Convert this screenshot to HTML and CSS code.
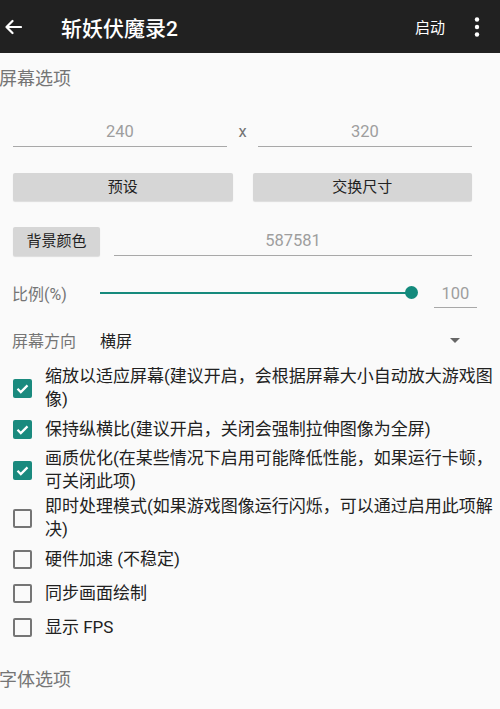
FILE: index.html
```html
<!DOCTYPE html>
<html lang="zh-CN">
<head>
    <meta charset="UTF-8">
    <meta name="viewport" content="width=device-width, initial-scale=1.0">
    <title>斩妖伏魔录2</title>
    <link rel="stylesheet" href="styles.css">
</head>
<body>
<div class="toolbar">
    <svg class="back" width="18" height="16" viewBox="0 0 18 16">
        <path d="M17 8H2.5M8.5 2L2.5 8l6 6" fill="none" stroke="#fff" stroke-width="2.2" stroke-linecap="round" stroke-linejoin="round"/>
    </svg>
    <div class="title">斩妖伏魔录2</div>
    <div class="action">启动</div>
    <svg class="more" width="6" height="20" viewBox="0 0 6 20">
        <circle cx="3" cy="2.5" r="2.2" fill="#fff"/>
        <circle cx="3" cy="10" r="2.2" fill="#fff"/>
        <circle cx="3" cy="17.5" r="2.2" fill="#fff"/>
    </svg>
</div>

<div class="section-title">屏幕选项</div>

<div class="group">
    <div class="size-row">
        <div class="field">240</div>
        <div class="times">x</div>
        <div class="field">320</div>
    </div>

    <div class="button-row">
        <div class="btn">预设</div>
        <div class="btn">交换尺寸</div>
    </div>

    <div class="color-row">
        <div class="btn btn-small">背景颜色</div>
        <div class="field">587581</div>
    </div>

    <div class="scale-row">
        <div class="label">比例(%)</div>
        <div class="slider">
            <div class="thumb"></div>
        </div>
        <div class="field field-small">100</div>
    </div>

    <div class="orient-row">
        <div class="label">屏幕方向</div>
        <div class="value">横屏</div>
        <div class="caret"></div>
    </div>
</div>

<div class="checks">
    <div class="check-row">
        <span class="box checked"><svg width="19" height="19" viewBox="0 0 19 19"><path d="M4.5 9.8l3.3 3.3 6.7-6.7" fill="none" stroke="#fff" stroke-width="2.2"/></svg></span>
        <span class="check-text">缩放以适应屏幕(建议开启，会根据屏幕大小自动放大游戏图<br>像)</span>
    </div>
    <div class="check-row">
        <span class="box checked"><svg width="19" height="19" viewBox="0 0 19 19"><path d="M4.5 9.8l3.3 3.3 6.7-6.7" fill="none" stroke="#fff" stroke-width="2.2"/></svg></span>
        <span class="check-text">保持纵横比(建议开启，关闭会强制拉伸图像为全屏)</span>
    </div>
    <div class="check-row">
        <span class="box checked"><svg width="19" height="19" viewBox="0 0 19 19"><path d="M4.5 9.8l3.3 3.3 6.7-6.7" fill="none" stroke="#fff" stroke-width="2.2"/></svg></span>
        <span class="check-text">画质优化(在某些情况下启用可能降低性能，如果运行卡顿，<br>可关闭此项)</span>
    </div>
    <div class="check-row">
        <span class="box"></span>
        <span class="check-text">即时处理模式(如果游戏图像运行闪烁，可以通过启用此项解<br>决)</span>
    </div>
    <div class="check-row">
        <span class="box"></span>
        <span class="check-text">硬件加速 (不稳定)</span>
    </div>
    <div class="check-row">
        <span class="box"></span>
        <span class="check-text">同步画面绘制</span>
    </div>
    <div class="check-row">
        <span class="box"></span>
        <span class="check-text">显示 FPS</span>
    </div>
</div>

<div class="section-title section-bottom">字体选项</div>
</body>
</html>
```

FILE: styles.css
```css
body {
    margin: 0;
    background-color: #fafafa;
    font-family: Roboto, "Noto Sans CJK SC", sans-serif;
    color: #212121;
    overflow: hidden;
}
.toolbar {
    height: 53px;
    background-color: #212121;
    display: flex;
    align-items: center;
    color: #fff;
}
.back {
    margin-left: 4px;
}
.title {
    margin-left: 39px;
    font-size: 21px;
    font-weight: 500;
    flex: 1;
}
.action {
    font-size: 15px;
    margin-right: 29px;
}
.more {
    margin-right: 20px;
}
.section-title {
    margin-top: 14px;
    margin-left: -1px;
    font-size: 18px;
    line-height: 24px;
    color: #757575;
}
.section-bottom {
    margin-top: 24px;
}
.group {
    padding: 0 28px 0 13px;
}
.field {
    flex: 1;
    height: 28px;
    line-height: 28px;
    border-bottom: 1px solid #a8a8a8;
    text-align: center;
    font-size: 16.5px;
    color: #9e9e9e;
}
.size-row {
    display: flex;
    margin-top: 27px;
}
.times {
    width: 31px;
    line-height: 28px;
    text-align: center;
    font-size: 16.5px;
    color: #757575;
}
.button-row {
    display: flex;
    gap: 20px;
    margin-top: 26px;
}
.btn {
    flex: 1;
    height: 28px;
    line-height: 28px;
    text-align: center;
    font-size: 15px;
    background-color: #d6d6d6;
    border-radius: 2px;
    box-shadow: 0 1px 1px rgba(0,0,0,0.12);
    color: #222;
}
.color-row {
    display: flex;
    align-items: flex-end;
    gap: 14px;
    margin-top: 26px;
}
.btn-small {
    flex: none;
    width: 87px;
    height: 29px;
    line-height: 29px;
}
.scale-row {
    display: flex;
    align-items: center;
    margin-top: 22px;
    margin-right: -5px;
}
.label {
    width: 88px;
    margin-left: -1px;
    font-size: 16px;
    color: #757575;
}
.slider {
    flex: 1;
    height: 2px;
    background-color: #168a7c;
    position: relative;
    margin-right: 22px;
}
.thumb {
    position: absolute;
    right: -6px;
    top: -6px;
    width: 13px;
    height: 13px;
    border-radius: 50%;
    background-color: #138a7c;
}
.field-small {
    flex: none;
    width: 43px;
    height: 27px;
    line-height: 27px;
    margin-top: 2px;
}
.orient-row {
    display: flex;
    align-items: center;
    height: 28px;
    margin-top: 18px;
}
.value {
    flex: 1;
    font-size: 16px;
    color: #212121;
}
.caret {
    width: 0;
    height: 0;
    border-left: 5px solid transparent;
    border-right: 5px solid transparent;
    border-top: 5px solid #666;
    margin-right: 12px;
}
.checks {
    margin-top: 10px;
    padding-left: 13px;
}
.check-row {
    display: flex;
    align-items: center;
    min-height: 34px;
    padding: 1px 0;
    box-sizing: border-box;
}
.box {
    width: 19px;
    height: 19px;
    box-sizing: border-box;
    border: 2px solid #757575;
    border-radius: 2px;
    flex: none;
}
.box.checked {
    border: none;
    background-color: #1a8a7e;
}
.box svg {
    display: block;
}
.check-text {
    margin-left: 13px;
    font-size: 17px;
    line-height: 23px;
    white-space: nowrap;
}
```
